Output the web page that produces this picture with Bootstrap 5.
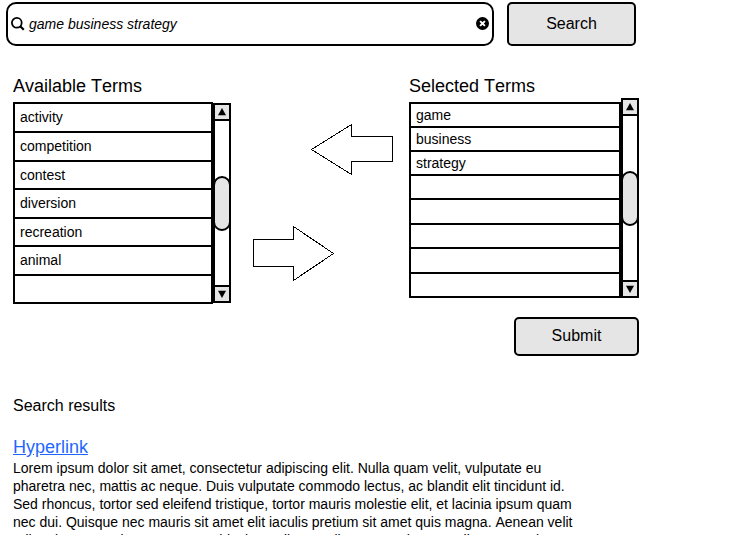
<!DOCTYPE html>
<html lang="en">
<head>
<meta charset="utf-8">
<meta name="viewport" content="width=device-width, initial-scale=1">
<title>Term search</title>
<link href="https://cdn.jsdelivr.net/npm/bootstrap@5.3.0/dist/css/bootstrap.min.css" rel="stylesheet">
<style>
body{font-family:"Liberation Sans",Arial,sans-serif;font-kerning:none;color:#000;background:#fff;height:535px;overflow:hidden;font-size:14px}
.page{width:633px;margin-left:6px;padding-top:2px}
.search-box{width:488px;height:44px;border:2px solid #000;border-radius:10px;padding:0 2px 0 3px;font-style:italic}
.search-box input{border:0;outline:0;padding:0;margin:0 0 0 4px;font:inherit;font-kerning:none;color:#000;background:none;min-width:0}
.btn-wire{--bs-btn-bg:#e5e5e5;--bs-btn-color:#000;--bs-btn-border-color:#000;--bs-btn-hover-bg:#d9d9d9;--bs-btn-hover-border-color:#000;--bs-btn-border-width:2px;--bs-btn-border-radius:5px;--bs-btn-font-size:16px;--bs-btn-padding-y:0;--bs-btn-line-height:18px}
.btn-search{width:129px;height:44px;margin-left:13px}
.btn-submit{width:125px;height:39px;padding-bottom:2px}
.panels{margin:29px 0 0 7px}
.panel-title{font-size:18px;line-height:22px;margin:0;height:27px}
.terms{border:2px solid #000;border-radius:0;margin:0}
.terms .list-group-item{border:0;border-bottom:2px solid #000;padding:4px 5px 0;color:#000;line-height:18px;background:#fff;border-radius:0}
.terms .list-group-item:last-child{border-bottom:0}
.available{width:200px;display:grid;grid-template-rows:29px 29px 28px 29px 28px 29px 26px}
.selected{width:212px;display:grid;grid-template-rows:24px 24px 24px 24px 25px 24px 25px 22px}
.selected .list-group-item{padding-top:2px}
.scroller{width:18px;border:2px solid #000;background:#fff}
.scroller-a{height:200px;margin-top:1px}
.scroller-s{height:200px;margin-top:-4px}
.arrow-key{height:16px;background:#e5e5e5;flex:none}
.arrow-key:first-child{border-bottom:2px solid #000}
.arrow-key:last-child{border-top:2px solid #000}
.thumb{width:18px;height:55px;border:2px solid #000;border-radius:9px;background:#e5e5e5;margin:55px -2px auto}
.arrow-left{margin-left:58px}
.arrow-right{margin-top:50px}
.moves{width:178px;padding:49px 0 0 22px}
.moves svg{display:block;fill:#fff;stroke:#000;shape-rendering:crispEdges}
.submit-row{padding-top:19px}
.results-title{font-size:16px;line-height:20px;margin:40px 0 0 7px}
.result{margin:19px 0 0 7px;width:570px}
.result a{font-size:18px;line-height:24px;color:#1f66ff;display:block;width:max-content}
.result p{line-height:18px;margin:0;white-space:nowrap}
</style>
</head>
<body>
<main class="page">
  <form class="d-flex" onsubmit="return false">
    <div class="search-box d-flex align-items-center">
      <svg width="14" height="14" viewBox="0 0 14 14" fill="none" stroke="#000" stroke-width="1.8"><circle cx="5.8" cy="5.8" r="4.9"/><path d="M9.2 9.2 12.8 12.8" stroke-width="2.2"/></svg>
      <input class="flex-grow-1" value="game business strategy" aria-label="Search">
      <svg width="14" height="14" viewBox="0 0 14 14"><circle cx="6.5" cy="6.5" r="6.5"/><path d="M4.1 4.1 8.9 8.9M8.9 4.1 4.1 8.9" stroke="#fff" stroke-width="2"/></svg>
    </div>
    <button class="btn btn-wire btn-search">Search</button>
  </form>

  <div class="panels d-flex">
    <section>
      <h2 class="panel-title fw-normal">Available Terms</h2>
      <div class="d-flex">
        <ul class="list-group terms available">
          <li class="list-group-item">activity</li>
          <li class="list-group-item">competition</li>
          <li class="list-group-item">contest</li>
          <li class="list-group-item">diversion</li>
          <li class="list-group-item">recreation</li>
          <li class="list-group-item">animal</li>
          <li class="list-group-item"></li>
        </ul>
        <div class="scroller scroller-a d-flex flex-column">
          <div class="arrow-key d-flex justify-content-center align-items-center"><svg width="8" height="8"><path d="M4 0 8 7.3H0Z"/></svg></div>
          <div class="thumb"></div>
          <div class="arrow-key d-flex justify-content-center align-items-center"><svg width="8" height="8"><path d="M0 .7H8L4 8Z"/></svg></div>
        </div>
      </div>
    </section>
    <div class="moves">
      <svg class="arrow-left" width="83" height="52"><path d="M.5 25.5 40.5 .5V12.5H81.5V37.5H40.5V50.5Z"/></svg>
      <svg class="arrow-right" width="82" height="56"><path d="M.5 13.5H40.5V.5L80.5 27.5 40.5 54.5V40.5H.5Z"/></svg>
    </div>
    <section>
      <h2 class="panel-title fw-normal">Selected Terms</h2>
      <div class="d-flex align-items-start">
        <ul class="list-group terms selected">
          <li class="list-group-item">game</li>
          <li class="list-group-item">business</li>
          <li class="list-group-item">strategy</li>
          <li class="list-group-item"></li>
          <li class="list-group-item"></li>
          <li class="list-group-item"></li>
          <li class="list-group-item"></li>
          <li class="list-group-item"></li>
        </ul>
        <div class="scroller scroller-s d-flex flex-column">
          <div class="arrow-key d-flex justify-content-center align-items-center"><svg width="8" height="8"><path d="M4 0 8 7.3H0Z"/></svg></div>
          <div class="thumb"></div>
          <div class="arrow-key d-flex justify-content-center align-items-center"><svg width="8" height="8"><path d="M0 .7H8L4 8Z"/></svg></div>
        </div>
      </div>
      <div class="submit-row d-flex justify-content-end"><button class="btn btn-wire btn-submit">Submit</button></div>
    </section>
  </div>

  <h3 class="results-title fw-normal">Search results</h3>
  <article class="result">
    <a href="#">Hyperlink</a>
    <p>Lorem ipsum dolor sit amet, consectetur adipiscing elit. Nulla quam velit, vulputate eu<br>pharetra nec, mattis ac neque. Duis vulputate commodo lectus, ac blandit elit tincidunt id.<br>Sed rhoncus, tortor sed eleifend tristique, tortor mauris molestie elit, et lacinia ipsum quam<br>nec dui. Quisque nec mauris sit amet elit iaculis pretium sit amet quis magna. Aenean velit<br>odio, elementum in tempus ut, vehicula eu diam. Pellentesque rhoncus aliquam mattis.</p>
  </article>
</main>
<script src="https://cdn.jsdelivr.net/npm/bootstrap@5.3.0/dist/js/bootstrap.bundle.min.js"></script>
</body>
</html>
